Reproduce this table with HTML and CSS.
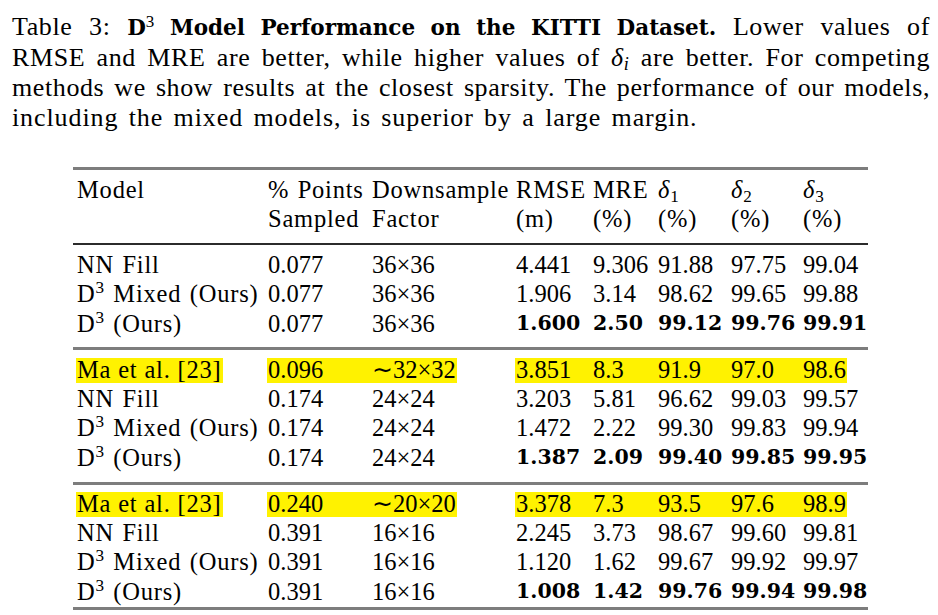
FILE: index.html
```html
<!DOCTYPE html>
<html lang="en">
<head>
<meta charset="utf-8">
<title>Table 3</title>
<link rel="stylesheet" href="styles.css">
</head>
<body>
<div class="caption">
  <div class="line">Table 3: <b class="cb">D<sup class="sr">3</sup> Model Performance on the KITTI Dataset.</b> Lower values of</div>
  <div class="line">RMSE and MRE are better, while higher values of <i>δ</i><sub><i>i</i></sub> are better. For competing</div>
  <div class="line">methods we show results at the closest sparsity. The performance of our models,</div>
  <div class="line last">including the mixed models, is superior by a large margin.</div>
</div>

<div class="table">
  <div class="thead row">
    <div class="c t">Model</div>
    <div class="c t">% Points<br>Sampled</div>
    <div class="c t">Downsample<br>Factor</div>
    <div class="c t">RMSE<br>(m)</div>
    <div class="c t">MRE<br>(%)</div>
    <div class="c t"><i>δ</i><sub>1</sub><br>(%)</div>
    <div class="c t"><i>δ</i><sub>2</sub><br>(%)</div>
    <div class="c t"><i>δ</i><sub>3</sub><br>(%)</div>
  </div>

  <div class="group g1">
    <div class="row">
      <div class="c t">NN Fill</div><div class="c">0.077</div><div class="c">36×36</div>
      <div class="c">4.441</div><div class="c">9.306</div><div class="c">91.88</div><div class="c">97.75</div><div class="c">99.04</div>
    </div>
    <div class="row">
      <div class="c t">D<sup>3</sup> Mixed (Ours)</div><div class="c">0.077</div><div class="c">36×36</div>
      <div class="c">1.906</div><div class="c">3.14</div><div class="c">98.62</div><div class="c">99.65</div><div class="c">99.88</div>
    </div>
    <div class="row">
      <div class="c t">D<sup>3</sup> (Ours)</div><div class="c">0.077</div><div class="c">36×36</div>
      <div class="c b">1.600</div><div class="c b">2.50</div><div class="c b">99.12</div><div class="c b">99.76</div><div class="c b">99.91</div>
    </div>
  </div>

  <div class="group g2">
    <div class="row">
      <div class="c t"><span class="hl">Ma et al. [23]</span></div>
      <div class="c"><span class="hl fill">0.096</span></div>
      <div class="c cont"><span class="hl">∼32×32</span></div>
      <div class="c"><span class="hl fill">3.851</span></div>
      <div class="c cont"><span class="hl fill">8.3</span></div>
      <div class="c cont"><span class="hl fill">91.9</span></div>
      <div class="c cont"><span class="hl fill">97.0</span></div>
      <div class="c cont"><span class="hl">98.6</span></div>
    </div>
    <div class="row">
      <div class="c t">NN Fill</div><div class="c">0.174</div><div class="c">24×24</div>
      <div class="c">3.203</div><div class="c">5.81</div><div class="c">96.62</div><div class="c">99.03</div><div class="c">99.57</div>
    </div>
    <div class="row">
      <div class="c t">D<sup>3</sup> Mixed (Ours)</div><div class="c">0.174</div><div class="c">24×24</div>
      <div class="c">1.472</div><div class="c">2.22</div><div class="c">99.30</div><div class="c">99.83</div><div class="c">99.94</div>
    </div>
    <div class="row">
      <div class="c t">D<sup>3</sup> (Ours)</div><div class="c">0.174</div><div class="c">24×24</div>
      <div class="c b">1.387</div><div class="c b">2.09</div><div class="c b">99.40</div><div class="c b">99.85</div><div class="c b">99.95</div>
    </div>
  </div>

  <div class="group g3">
    <div class="row">
      <div class="c t"><span class="hl">Ma et al. [23]</span></div>
      <div class="c"><span class="hl fill">0.240</span></div>
      <div class="c cont"><span class="hl">∼20×20</span></div>
      <div class="c"><span class="hl fill">3.378</span></div>
      <div class="c cont"><span class="hl fill">7.3</span></div>
      <div class="c cont"><span class="hl fill">93.5</span></div>
      <div class="c cont"><span class="hl fill">97.6</span></div>
      <div class="c cont"><span class="hl">98.9</span></div>
    </div>
    <div class="row">
      <div class="c t">NN Fill</div><div class="c">0.391</div><div class="c">16×16</div>
      <div class="c">2.245</div><div class="c">3.73</div><div class="c">98.67</div><div class="c">99.60</div><div class="c">99.81</div>
    </div>
    <div class="row">
      <div class="c t">D<sup>3</sup> Mixed (Ours)</div><div class="c">0.391</div><div class="c">16×16</div>
      <div class="c">1.120</div><div class="c">1.62</div><div class="c">99.67</div><div class="c">99.92</div><div class="c">99.97</div>
    </div>
    <div class="row">
      <div class="c t">D<sup>3</sup> (Ours)</div><div class="c">0.391</div><div class="c">16×16</div>
      <div class="c b">1.008</div><div class="c b">1.42</div><div class="c b">99.76</div><div class="c b">99.94</div><div class="c b">99.98</div>
    </div>
  </div>
</div>
</body>
</html>
```

FILE: styles.css
```css
html, body {
  margin: 0;
  padding: 0;
  background: #ffffff;
}

body {
  font-family: "Liberation Serif", "Times New Roman", serif;
  font-size: 24.5px;
  color: #000000;
}

sup {
  font-size: 0.7em;
  line-height: 0;
  vertical-align: 0.5em;
}

sub {
  font-size: 0.7em;
  line-height: 0;
  vertical-align: -0.22em;
}

/* Caption */
.caption {
  padding: 12px 8px 0 12px;
  font-size: 26px;
  line-height: 30px;
  letter-spacing: 0.6px;
  word-spacing: 1.5px;
}

.line {
  text-align: justify;
  text-align-last: justify;
}

.line.last {
  text-align: left;
  text-align-last: left;
  letter-spacing: 0.9px;
  word-spacing: 3px;
}

.cb {
  font-family: "DejaVu Serif", serif;
  font-weight: bold;
  font-size: 21.5px;
  letter-spacing: 0;
  word-spacing: 0;
}

.cb .sr {
  font-family: "Liberation Serif", serif;
  font-weight: normal;
  font-size: 17px;
}

/* Table */
.table {
  margin: 34px 0 0 73px;
  width: 795px;
  line-height: 29.3px;
}

.row {
  display: grid;
  grid-template-columns: 191px 104px 144px 77px 65px 73px 72px 69px;
}

.c {
  padding-left: 4px;
  white-space: nowrap;
}

.c.t {
  letter-spacing: 0.8px;
  word-spacing: 1.5px;
}

.thead {
  border-top: 3px solid #7d7d7d;
  border-bottom: 2px solid #2b2b2b;
  padding: 5px 0 9.4px;
}

.group.g1 {
  padding: 5px 0 9px;
}

.group.g2 {
  border-top: 3px solid #7d7d7d;
  padding: 5px 0 9.7px;
}

.group.g3 {
  border-top: 3px solid #7d7d7d;
  border-bottom: 3px solid #7d7d7d;
  padding: 4px 0 0.8px;
}

.b {
  font-family: "DejaVu Serif", serif;
  font-weight: bold;
  font-size: 20.5px;
}

/* Highlights */
.hl {
  display: inline-block;
  background: #fff200;
  line-height: 23px;
  padding: 0 1px 2px 1px;
  margin-left: -1px;
  word-spacing: 0;
}

.hl.fill {
  box-sizing: border-box;
  width: calc(100% + 1px);
}

.c.cont {
  padding-left: 0;
}

.c.cont .hl {
  margin-left: 0;
  padding-left: 4px;
}

.c.cont .hl.fill {
  width: 100%;
}
```
